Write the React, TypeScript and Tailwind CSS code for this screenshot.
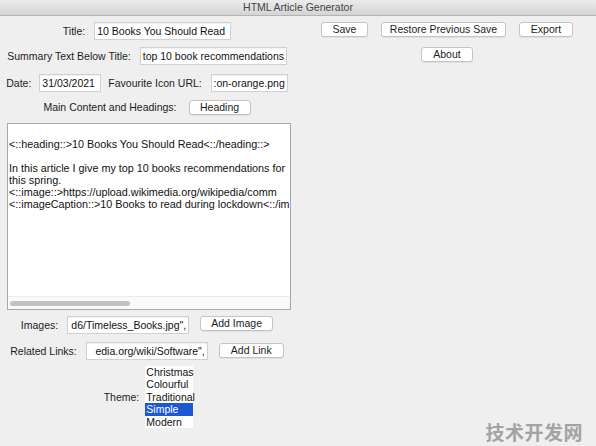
import React from 'react'

const font = { fontFamily: '"Liberation Sans", Arial, sans-serif' }

function Btn({ label, w }: { label: string; w: string }) {
  return (
    <div
      className={`${w} h-[15px] shrink-0 flex items-center justify-center bg-white border border-[#c4c4c4] rounded-[3px] shadow-[0_1px_0_rgba(0,0,0,0.06)] text-[10.5px] leading-none text-[#1c1c1c]`}
    >
      {label}
    </div>
  )
}

function Field({ value, w, right }: { value: string; w: string; right?: boolean }) {
  return (
    <div
      className={`${w} h-[18px] shrink-0 flex items-center bg-white border border-[#d0d0d0] shadow-[inset_0_1px_0_rgba(0,0,0,0.05)] overflow-hidden whitespace-nowrap px-[2px] text-[10.5px] leading-none text-[#111] ${right ? 'justify-end' : ''}`}
    >
      {value}
    </div>
  )
}

const content = `
<::heading::>10 Books You Should Read<::/heading::>

In this article I give my top 10 books recommendations for
this spring.
<::image::>https://upload.wikimedia.org/wikipedia/comm
<::imageCaption::>10 Books to read during lockdown<::/im`

const themes = ['Christmas', 'Colourful', 'Traditional', 'Simple', 'Modern']

export default function App() {
  return (
    <div className="relative w-[596px] h-[446px] bg-[#efefef] overflow-hidden text-[#1c1c1c]" style={font}>
      {/* title bar */}
      <div className="h-[16px] bg-gradient-to-b from-[#ececec] to-[#d4d4d4] border-b border-[#b4b4b4] flex items-center justify-center text-[10.5px] leading-none text-[#444]">
        HTML Article Generator
      </div>

      <div className="flex">
        {/* left column */}
        <div className="w-[294px] flex flex-col text-[10.5px] leading-none">
          <div className="mt-[6px] h-[18px] flex items-center justify-center gap-[9px]">
            <span>Title:</span>
            <Field value="10 Books You Should Read" w="w-[137px]" />
          </div>

          <div className="mt-[7px] h-[18px] flex items-center justify-center gap-[9px]">
            <span>Summary Text Below Title:</span>
            <Field value="top 10 book recommendations" w="w-[147px]" />
          </div>

          <div className="mt-[9px] h-[18px] flex items-center justify-center">
            <span>Date:</span>
            <div className="ml-[8px]">
              <Field value="31/03/2021" w="w-[62px]" />
            </div>
            <span className="ml-[7px]">Favourite Icon URL:</span>
            <div className="ml-[9px]">
              <Field value=":on-orange.png" w="w-[77px]" right />
            </div>
          </div>

          <div className="mt-[8px] h-[15px] flex items-center justify-center gap-[12px]">
            <span>Main Content and Headings:</span>
            <Btn label="Heading" w="w-[62px]" />
          </div>

          {/* content area */}
          <div className="mt-[8px] ml-[7px] w-[284px] h-[187px] bg-white border border-[#a8a8a8] flex flex-col">
            <div className="flex-1 overflow-hidden whitespace-pre pl-[1px] pt-[2px] text-[10.8px] leading-[12px] text-[#111]">
              {content}
            </div>
            <div className="h-[13px] border-t border-[#ececec] bg-[#fafafa] flex items-center px-[2px]">
              <div className="w-[120px] h-[5px] rounded-full bg-[#c2c2c2]" />
            </div>
          </div>

          <div className="mt-[6px] flex items-start justify-center">
            <span className="h-[18px] flex items-center">Images:</span>
            <div className="ml-[9px]">
              <Field value={'d6/Timeless_Books.jpg",'} w="w-[122px]" right />
            </div>
            <div className="ml-[11px]">
              <Btn label="Add Image" w="w-[73px]" />
            </div>
          </div>

          <div className="mt-[8px] flex items-start justify-center">
            <span className="h-[18px] flex items-center">Related Links:</span>
            <div className="ml-[9px]">
              <Field value={'edia.org/wiki/Software",'} w="w-[122px]" right />
            </div>
            <div className="ml-[11px] mt-[1px]">
              <Btn label="Add Link" w="w-[65px]" />
            </div>
          </div>

          <div className="mt-[6px] flex items-center justify-center gap-[6px] pl-[3px]">
            <span>Theme:</span>
            <div className="w-[48px] h-[62px] bg-white flex flex-col">
              {themes.map((t) => (
                <div
                  key={t}
                  className={`h-[12.4px] flex items-center pl-[1px] whitespace-nowrap ${
                    t === 'Simple' ? 'bg-[#1c58d3] text-white' : 'text-[#111]'
                  }`}
                >
                  {t}
                </div>
              ))}
            </div>
          </div>
        </div>

        {/* right column */}
        <div className="ml-[27px] w-[252px] pt-[6px] flex flex-col">
          <div className="flex justify-center gap-[13px]">
            <Btn label="Save" w="w-[47px]" />
            <Btn label="Restore Previous Save" w="w-[125px]" />
            <Btn label="Export" w="w-[54px]" />
          </div>
          <div className="mt-[10px] flex justify-center">
            <Btn label="About" w="w-[52px]" />
          </div>
        </div>
      </div>

      {/* watermark */}
      <div
        className="absolute right-[13px] bottom-[5px] text-[19px] font-bold leading-none tracking-[0.5px] text-[#a3a3a3]"
        style={{ fontFamily: '"Noto Sans CJK SC", sans-serif' }}
      >
        技术开发网
      </div>
    </div>
  )
}
